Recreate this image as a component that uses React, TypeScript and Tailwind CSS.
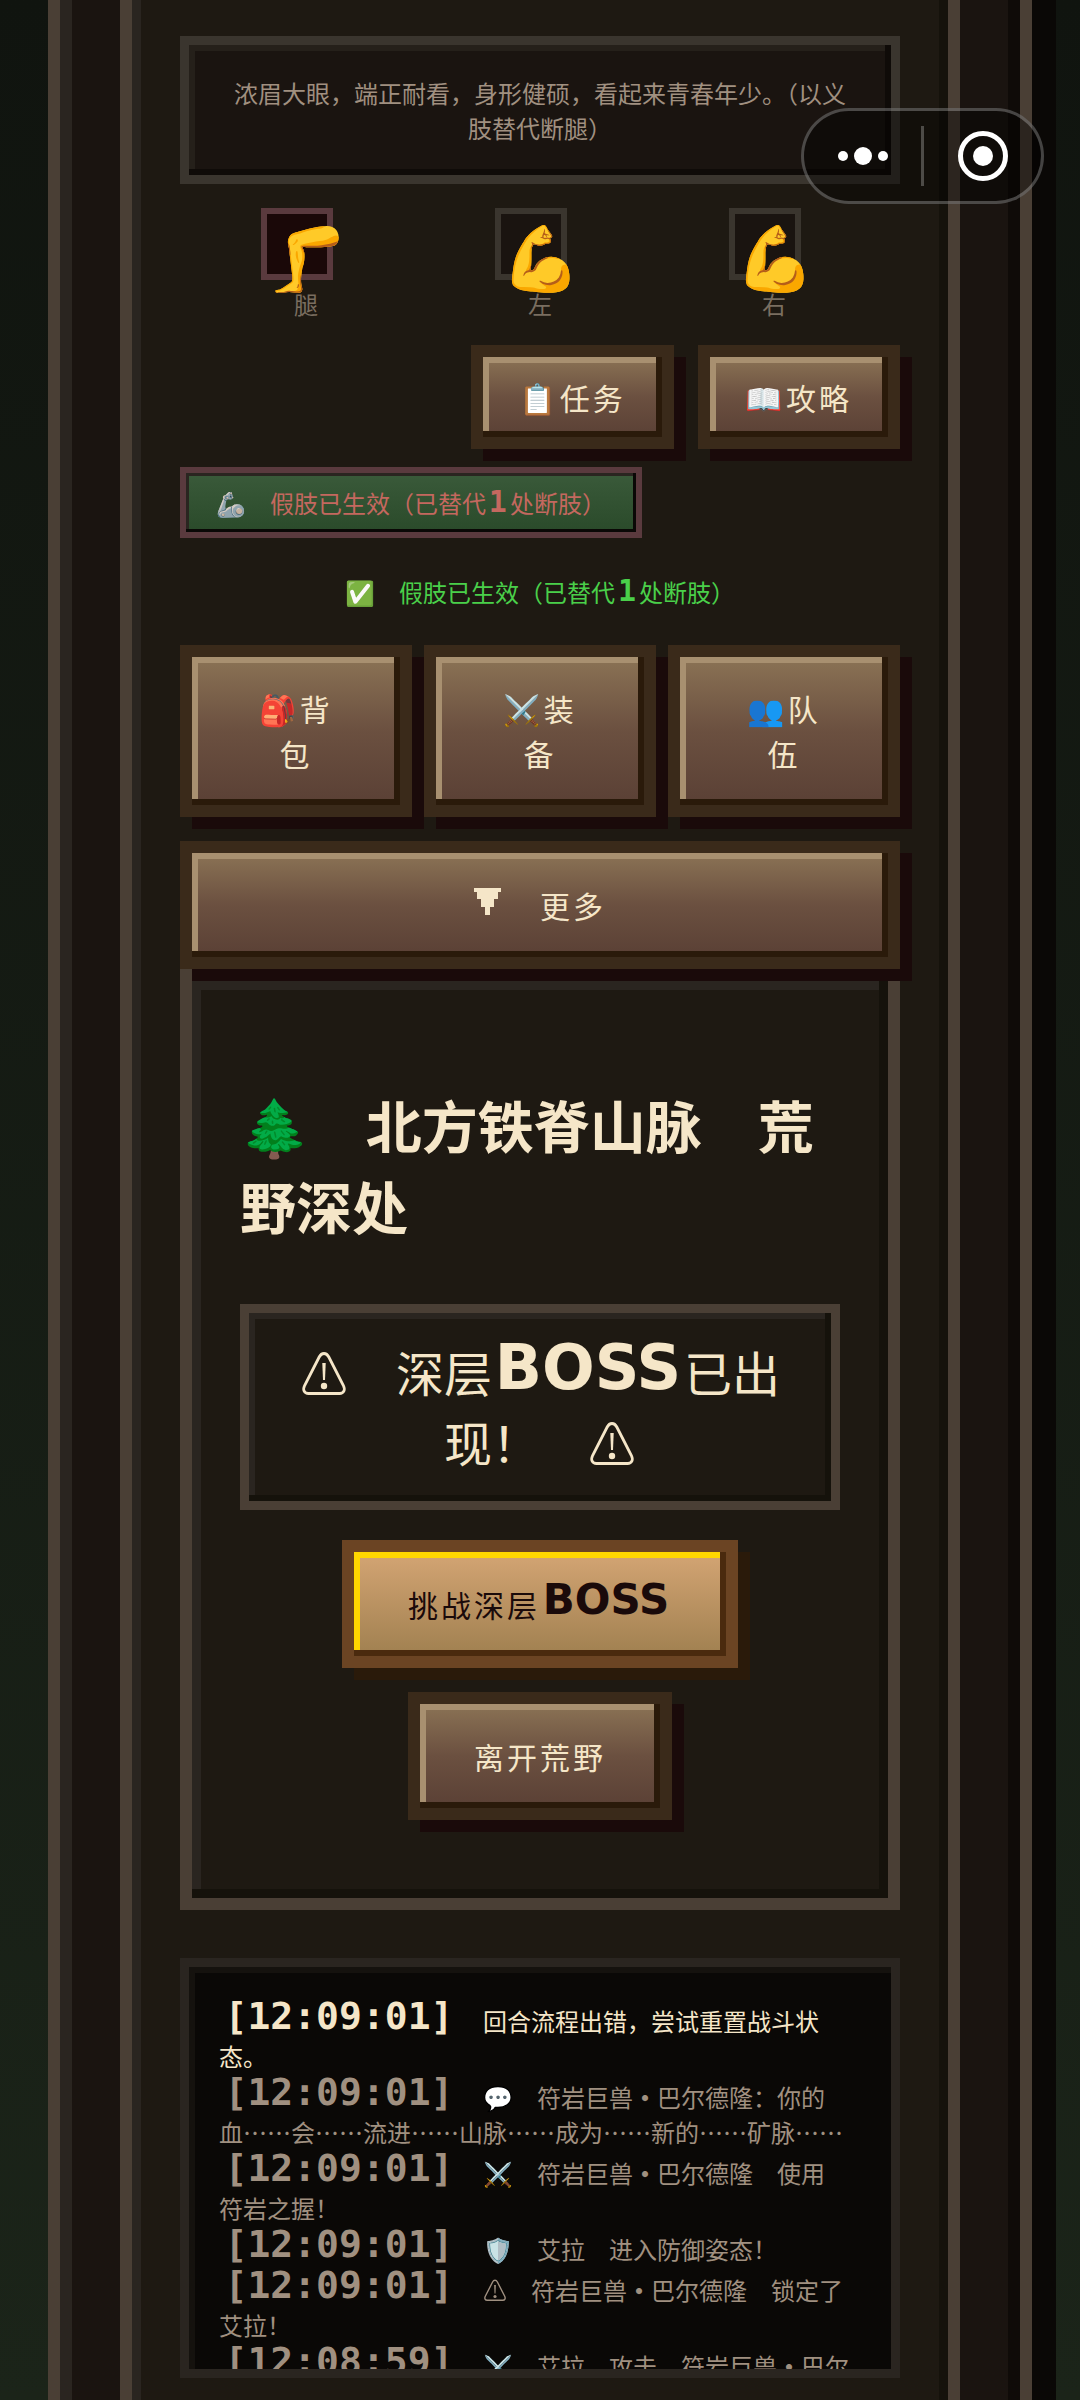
import type { ReactNode } from 'react';
import clsx from 'clsx';

type LogEntry = { time: string; icon?: string; text: string };

const LOG: LogEntry[] = [
  { time: '[12:09:01]', text: '回合流程出错，尝试重置战斗状态。' },
  { time: '[12:09:01]', icon: '💬', text: '符岩巨兽·巴尔德隆：你的血……会……流进……山脉……成为……新的……矿脉……' },
  { time: '[12:09:01]', icon: '⚔️', text: '符岩巨兽·巴尔德隆　使用　符岩之握！' },
  { time: '[12:09:01]', icon: '🛡️', text: '艾拉　进入防御姿态！' },
  { time: '[12:09:01]', icon: 'warn', text: '符岩巨兽·巴尔德隆　锁定了　艾拉！' },
  { time: '[12:08:59]', icon: '⚔️', text: '艾拉　攻击　符岩巨兽·巴尔' },
];

const LIMBS = [
  { icon: '🦵', label: '腿', lost: true },
  { icon: '💪', label: '左', lost: false },
  { icon: '💪', label: '右', lost: false },
];

// full-width blank, JSX would trim it at line ends
const GAP = '\u3000';

function Emoji({ children, className }: { children: ReactNode; className?: string }) {
  return (
    <span className={clsx("leading-none font-['Noto_Color_Emoji',sans-serif]", className)}>
      {children}
    </span>
  );
}

// latin text in the game is set in a wide, heavy face
function Wide({ children, className }: { children: ReactNode; className?: string }) {
  return (
    <span className={clsx('inline-block text-center leading-[0.7] font-bold align-[0.05em]', className)}>
      {children}
    </span>
  );
}

function WarnIcon({ className }: { className?: string }) {
  return (
    <svg viewBox="0 0 48 48" fill="none" className={clsx('inline-block h-[1em] w-[1em] align-[-0.1em]', className)}>
      <path
        d="M24 4.500C21.800 4.500 20.300 5.800 19.200 8L4.600 36.500C2.500 41 4.200 44.500 8.500 44.500H39.500C43.800 44.500 45.500 41 43.400 36.500L28.800 8C27.700 5.800 26.200 4.500 24 4.500Z"
        stroke="currentColor"
        strokeWidth="2.800"
      />
      <path d="M22.300 14h3.400l-.7 17h-2z" fill="currentColor" />
      <circle cx="24" cy="37" r="3.200" fill="currentColor" />
    </svg>
  );
}

function PixelButton({ children, className, gold }: { children: ReactNode; className?: string; gold?: boolean }) {
  return (
    <button
      type="button"
      className={clsx(
        'border-12 text-center text-[30px] leading-[45px] tracking-widest cursor-pointer',
        gold
          ? 'border-[#6b4423] bg-linear-to-b from-[#d4a574] to-[#a08050] bg-origin-padding text-[#1a0a0a] shadow-[12px_12px_0_#2a1a0a,inset_-6px_-6px_0_#4a2a0e,inset_6px_6px_0_#ffd700]'
          : 'border-[#3a2a1a] bg-linear-to-b from-[#8b7355] via-[#6b5040] to-[#5a4035] bg-origin-padding text-[#f5e6c8] shadow-[12px_12px_0_#1a0a0a,inset_-6px_-6px_0_#2a1a0a,inset_6px_6px_0_#a89070]',
        className,
      )}
    >
      {children}
    </button>
  );
}

function ProsthesisText() {
  return (
    <>
      {GAP}假肢已生效（已替代<Wide className="w-6 text-[30px] font-['DejaVu_Sans_Mono']">1</Wide>处断肢）
    </>
  );
}

function LogText({ text }: { text: string }) {
  const parts = text.split('·');
  return (
    <>
      {parts.map((part, i) => (
        <span key={i}>
          {i > 0 && <span className="inline-block w-6 text-left font-bold">·</span>}
          {part}
        </span>
      ))}
    </>
  );
}

function Capsule() {
  return (
    <div className="absolute top-[108px] right-9 z-20 flex h-24 w-[243px] items-center rounded-full border-3 border-white/25 bg-black/40">
      <button type="button" aria-label="菜单" className="flex h-full w-[117px] items-center justify-center gap-1.5">
        <span className="size-2.5 rounded-full bg-white" />
        <span className="size-[18px] rounded-full bg-white" />
        <span className="size-2.5 rounded-full bg-white" />
      </button>
      <span className="h-15 w-[3px] bg-white/25" />
      <button type="button" aria-label="关闭" className="flex h-full flex-1 items-center justify-center">
        <span className="flex size-[50px] items-center justify-center rounded-full border-5 border-white">
          <span className="size-5 rounded-full bg-white" />
        </span>
      </button>
    </div>
  );
}

export default function App() {
  return (
    <div className="relative min-h-screen bg-linear-to-b from-[#10140f] to-[#1b2419] px-12 font-['Noto_Sans_CJK_SC',sans-serif] text-[#f5e6c8]">
      <Capsule />
      <div className="border-x-12 border-[#4a3f35] bg-[#1a1410] px-15 shadow-[24px_0_0_#0a0806,inset_12px_0_0_#2a2520,inset_-12px_0_0_#0f0b08]">
        <main className="min-h-screen border-x-12 border-[#4a3f35] bg-[#1e1912] px-12 pt-9 pb-[22px] shadow-[inset_9px_0_0_#2a2520,inset_-9px_0_0_#15120b]">
          <p className="border-9 border-[#3a352e] bg-[#1a1410] px-9 py-[30px] text-center text-2xl leading-[35px] text-[#a09080] shadow-[inset_-6px_-6px_0_#0f0b08,inset_6px_6px_0_#25201a]">
            浓眉大眼，端正耐看，身形健硕，看起来青春年少。（以义肢替代断腿）
          </p>

          <div className="mt-6 grid grid-cols-3 px-[9px]">
            {LIMBS.map(limb => (
              <div key={limb.label} className="flex flex-col items-center">
                <div className={clsx('mr-[18px] size-18 border-6 pt-3.5', limb.lost ? 'border-[#5a3a3e] bg-[#1a0808]' : 'border-[#3a352e] bg-[#1a1410]')}>
                  <Emoji className="block text-[64px]">{limb.icon}</Emoji>
                </div>
                <span className="mt-1.5 text-2xl leading-9 text-[#7a6e60]">{limb.label}</span>
              </div>
            ))}
          </div>

          <div className="mt-[23px] flex justify-end gap-6">
            <PixelButton className="h-26 px-9"><Emoji>📋</Emoji>任务</PixelButton>
            <PixelButton className="h-26 px-9"><Emoji>📖</Emoji>攻略</PixelButton>
          </div>

          <div className="mt-[18px] flex">
            <p className="border-6 border-[#5a3a3e] bg-linear-to-b from-[#3a5a3a] to-[#2a4a2a] px-[30px] py-3 text-2xl leading-[35px] text-[#c4685f] shadow-[inset_-3px_-3px_0_#0a0806,inset_3px_3px_0_#2a2520]">
              <Emoji>🦾</Emoji>
              <ProsthesisText />
            </p>
          </div>

          <p className="mt-9 mb-9 text-center text-2xl leading-[35px] text-[#4ad04a]">
            <Emoji>✅</Emoji>
            <ProsthesisText />
          </p>

          <div className="grid grid-cols-3 gap-3">
            <PixelButton className="px-[54px] py-[29px]"><Emoji>🎒</Emoji>背包</PixelButton>
            <PixelButton className="px-[54px] py-[29px]"><Emoji>⚔️</Emoji>装备</PixelButton>
            <PixelButton className="px-[54px] py-[29px]"><Emoji>👥</Emoji>队伍</PixelButton>
          </div>

          <PixelButton className="relative mt-6 h-32 w-full">
            <svg viewBox="0 0 27 27" fill="currentColor" className="mr-1.5 inline-block size-[27px] align-[3px]">
              <path d="M0 0h27v4h-3v7h-4v8h-4v8h-5v-8h-4v-8h-4v-7h-3z" />
            </svg>
            {GAP}更多
          </PixelButton>

          <section className="flex flex-col border-12 border-[#4a3f35] px-12 pt-[102px] pb-[78px] shadow-[inset_-9px_-9px_0_#15120b,inset_9px_9px_0_#2a2520]">
            <h2 className="text-[56px] leading-[81px] font-bold">
              <Emoji>🌲</Emoji>{GAP}北方铁脊山脉{GAP}荒野深处
            </h2>

            <div className="mt-[59px] border-9 border-[#4a3f35] px-[30px] pt-[23px] pb-[25px] text-center text-5xl leading-[70px] shadow-[inset_-6px_-6px_0_#15120b,inset_6px_6px_0_#2a2520]">
              <WarnIcon />{GAP}深层<Wide className="w-48 text-[62px] font-['DejaVu_Sans']">BOSS</Wide>已出现！{GAP}<WarnIcon />
            </div>

            <div className="mt-[30px] flex flex-col items-center gap-6">
              <PixelButton gold className="h-32 px-[54px]">
                挑战深层<Wide className="w-33 text-[42px] tracking-normal font-['DejaVu_Sans']">BOSS</Wide>
              </PixelButton>
              <PixelButton className="h-32 px-[54px]">离开荒野</PixelButton>
            </div>
          </section>

          <ul className="mt-12 h-[420px] overflow-hidden border-9 border-[#2a2520] bg-[#0a0806] px-[30px] pt-9 text-2xl leading-[35px] shadow-[inset_6px_6px_0_#15120e]">
            {LOG.map((entry, i) => (
              <li key={i} className={clsx('mb-1.5', i > 0 && 'text-[#a09080]')}>
                <Wide className="w-60 text-[38px] font-['DejaVu_Sans_Mono']">{entry.time}</Wide>{GAP}
                {entry.icon === 'warn' && <><WarnIcon />{GAP}</>}
                {entry.icon && entry.icon !== 'warn' && <><Emoji>{entry.icon}</Emoji>{GAP}</>}
                <LogText text={entry.text} />
              </li>
            ))}
          </ul>
        </main>
      </div>
    </div>
  );
}
